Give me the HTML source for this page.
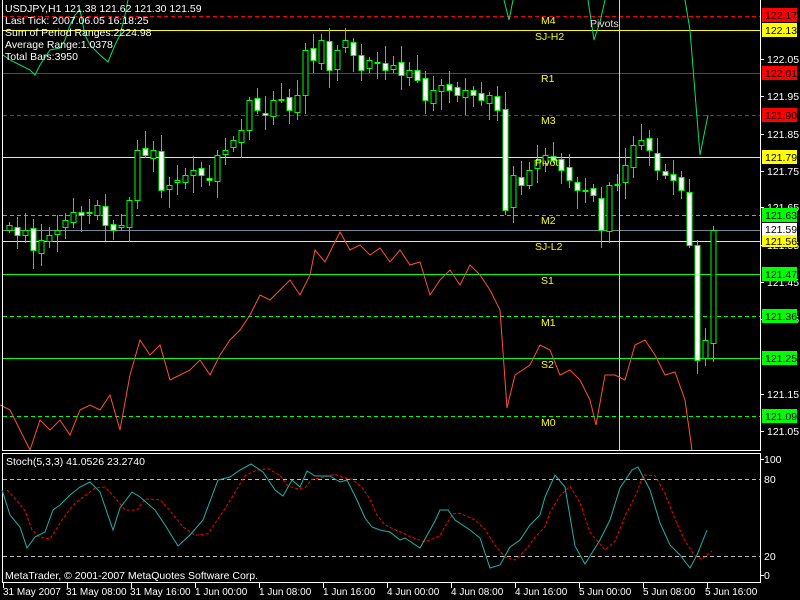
<!DOCTYPE html>
<html><head><meta charset="utf-8"><style>
html,body{margin:0;padding:0;background:#000;width:800px;height:600px;overflow:hidden}
svg{display:block}
text{font-family:"Liberation Sans",sans-serif;font-size:10.5px}
</style></head><body>
<svg id="s" width="800" height="600" viewBox="0 0 800 600" xmlns="http://www.w3.org/2000/svg">
<rect width="800" height="600" fill="#000"/>
<g stroke-width="1" shape-rendering="crispEdges">
<line x1="3" y1="16.5" x2="760" y2="16.5" stroke="#ff0000" stroke-dasharray="4,3"/>
<line x1="3" y1="30.5" x2="760" y2="30.5" stroke="#ffff00"/>
<line x1="3" y1="73.5" x2="760" y2="73.5" stroke="#ff0000"/>
<line x1="3" y1="115.5" x2="760" y2="115.5" stroke="#ff0000" stroke-dasharray="4,3"/>
<line x1="3" y1="157.5" x2="760" y2="157.5" stroke="#ffff00"/>
<line x1="3" y1="215.5" x2="760" y2="215.5" stroke="#00ff00" stroke-dasharray="4,3"/>
<line x1="3" y1="230.5" x2="760" y2="230.5" stroke="#778899"/>
<line x1="3" y1="241.5" x2="760" y2="241.5" stroke="#ffff00"/>
<line x1="3" y1="274.5" x2="760" y2="274.5" stroke="#00ff00"/>
<line x1="3" y1="316.5" x2="760" y2="316.5" stroke="#00ff00" stroke-dasharray="4,3"/>
<line x1="3" y1="358.5" x2="760" y2="358.5" stroke="#00ff00"/>
<line x1="3" y1="416.5" x2="760" y2="416.5" stroke="#00ff00" stroke-dasharray="4,3"/>
<line x1="619.5" y1="0" x2="619.5" y2="450" stroke="#d8d8b0"/>
</g>
<g id="candles"></g>
<polyline fill="none" stroke="#ff5030" stroke-width="1" points="0,405 10,410 20,430 30,450 40,420 50,430 60,420 70,435 80,410 90,405 100,410 110,395 120,430 130,375 140,340 150,355 160,345 170,380 180,375 190,370 200,360 210,375 220,355 230,340 240,330 250,315 260,295 270,300 280,290 290,280 300,295 310,275 315,250 325,262 340,232 350,250 360,245 370,255 380,248 390,262 400,250 410,265 420,262 430,295 440,280 450,270 460,285 470,265 480,275 490,290 500,310 507,408 515,375 530,365 540,345 550,350 560,375 570,370 580,380 590,400 596,425 605,375 615,375 625,380 635,345 645,340 655,355 665,375 675,372 685,400 692,450"/>
<g fill="none" stroke="#00e070" stroke-width="1">
<polyline points="3,55 10,60 20,65 30,70 35,75 40,65 50,50 60,48 65,40 70,25 75,15 80,10 85,35 90,45 100,55 108,62 115,45 120,35 125,15 128,0"/>
<polyline points="504,0 509,20 513,0"/>
<polyline points="588,0 594,40 600,22 605,0"/>
<polyline points="685,0 690,30 700,155 708,115"/>
</g>
<g fill="#ffff00">
<text x="541" y="24">M4</text><text x="535" y="40">SJ-H2</text><text x="541" y="82">R1</text>
<text x="541" y="124">M3</text><text x="535" y="166">Pivot</text><text x="541" y="224">M2</text>
<text x="535" y="250">SJ-L2</text><text x="541" y="284">S1</text><text x="541" y="326">M1</text>
<text x="541" y="368">S2</text><text x="541" y="426">M0</text>
</g>
<text x="590" y="27" fill="#e0e0d0">Pivots</text>
<g fill="#fff">
<text x="5" y="12">USDJPY,H1  121.38 121.62 121.30 121.59</text>
<text x="5" y="24">Last Tick: 2007.06.05 16:18:25</text>
<text x="5" y="36">Sum of Period Ranges:2224.98</text>
<text x="5" y="48">Average Range:1.0378</text>
<text x="5" y="60">Total Bars:3950</text>
</g>
<g stroke="#fff" fill="none" shape-rendering="crispEdges">
<line x1="2.5" y1="0" x2="2.5" y2="450"/>
<line x1="760.5" y1="0" x2="760.5" y2="450.5"/>
<line x1="2" y1="450.5" x2="761" y2="450.5"/>
<rect x="2.5" y="453.5" width="758" height="129"/>
</g>
<g fill="#fff">
<text x="767" y="63">122.05</text><text x="767" y="100">121.95</text><text x="767" y="138">121.85</text>
<text x="767" y="175">121.75</text><text x="767" y="211">121.65</text><text x="767" y="249">121.55</text>
<text x="767" y="286">121.45</text><text x="767" y="323">121.35</text><text x="767" y="398">121.15</text>
<text x="767" y="435">121.05</text>
</g>
<g stroke="#fff" shape-rendering="crispEdges">
<line x1="761" y1="59.5" x2="764" y2="59.5"/><line x1="761" y1="96.5" x2="764" y2="96.5"/><line x1="761" y1="134.5" x2="764" y2="134.5"/><line x1="761" y1="171.5" x2="764" y2="171.5"/><line x1="761" y1="207.5" x2="764" y2="207.5"/><line x1="761" y1="245.5" x2="764" y2="245.5"/><line x1="761" y1="282.5" x2="764" y2="282.5"/><line x1="761" y1="319.5" x2="764" y2="319.5"/><line x1="761" y1="394.5" x2="764" y2="394.5"/><line x1="761" y1="431.5" x2="764" y2="431.5"/>
</g>
<g font-size="10.5">
<rect x="762" y="8" width="35" height="14" fill="#ff0000"/><text x="765" y="19" fill="#000">122.17</text>
<rect x="762" y="23" width="35" height="14" fill="#ffff00"/><text x="765" y="34" fill="#000">122.13</text>
<rect x="762" y="66" width="35" height="14" fill="#ff0000"/><text x="765" y="77" fill="#000">122.01</text>
<rect x="762" y="108" width="35" height="14" fill="#ff0000"/><text x="765" y="119" fill="#000">121.90</text>
<rect x="762" y="150" width="35" height="14" fill="#ffff00"/><text x="765" y="161" fill="#000">121.79</text>
<rect x="762" y="208" width="35" height="14" fill="#00ff00"/><text x="765" y="219" fill="#000">121.63</text>
<rect x="762" y="223" width="35" height="12" fill="#ffffff"/><text x="765" y="233" fill="#000">121.59</text>
<rect x="762" y="235" width="35" height="12" fill="#ffff00"/><text x="765" y="245" fill="#000">121.56</text>
<rect x="762" y="267" width="35" height="14" fill="#00ff00"/><text x="765" y="278" fill="#000">121.47</text>
<rect x="762" y="309" width="35" height="14" fill="#00ff00"/><text x="765" y="320" fill="#000">121.36</text>
<rect x="762" y="351" width="35" height="14" fill="#00ff00"/><text x="765" y="362" fill="#000">121.25</text>
<rect x="762" y="409" width="35" height="14" fill="#00ff00"/><text x="765" y="420" fill="#000">121.09</text>
</g>
<g stroke="#c0c0c0" stroke-dasharray="4,3" shape-rendering="crispEdges">
<line x1="3" y1="479.5" x2="760" y2="479.5"/><line x1="3" y1="556.5" x2="760" y2="556.5"/>
</g>
<polyline id="sig" fill="none" stroke="#ff0000" stroke-width="1" stroke-dasharray="3,2" points=""/>
<polyline id="stm" fill="none" stroke="#20b2aa" stroke-width="1" points="2,490 10,515 20,527 27,548 35,537 45,532 53,510 60,505 70,495 80,487 90,482 100,492 113,530 120,508 132,492 140,497 155,510 165,525 178,546 190,535 203,520 218,480 230,477 240,470 251,464 263,472 275,490 283,496 292,480 300,487 307,471 315,476 330,476 340,482 347,480 357,500 365,518 372,527 380,530 390,532 400,540 405,538 420,548 435,521 440,510 448,510 455,520 470,530 480,538 490,568 500,565 510,547 520,540 530,525 540,515 545,497 555,475 565,487 575,546 585,564 600,540 610,520 620,488 632,470 638,467 650,490 660,523 670,545 680,555 690,568 697,555 707,530"/>
<text x="6" y="465" fill="#fff">Stoch(5,3,3) 41.0526 23.2740</text>
<text x="5" y="579" fill="#fff">MetaTrader, © 2001-2007 MetaQuotes Software Corp.</text>
<g fill="#fff">
<text x="764" y="463">100</text><text x="764" y="483">80</text><text x="764" y="560">20</text><text x="764" y="579">0</text>
</g>
<g stroke="#fff" shape-rendering="crispEdges">
<line x1="761" y1="459.5" x2="764" y2="459.5"/><line x1="761" y1="575.5" x2="764" y2="575.5"/>
</g>
<g id="tt" stroke="#fff" shape-rendering="crispEdges"></g>
<g fill="#fff" font-size="10" style="font-size:10px">
<text x="3" y="595" style="font-size:10px">31 May 2007</text><text x="66" y="595" style="font-size:10px">31 May 08:00</text><text x="130" y="595" style="font-size:10px">31 May 16:00</text>
<text x="195" y="595" style="font-size:10px">1 Jun 00:00</text><text x="259" y="595" style="font-size:10px">1 Jun 08:00</text><text x="323" y="595" style="font-size:10px">1 Jun 16:00</text>
<text x="387" y="595" style="font-size:10px">4 Jun 00:00</text><text x="451" y="595" style="font-size:10px">4 Jun 08:00</text><text x="515" y="595" style="font-size:10px">4 Jun 16:00</text>
<text x="579" y="595" style="font-size:10px">5 Jun 00:00</text><text x="643" y="595" style="font-size:10px">5 Jun 08:00</text><text x="705" y="595" style="font-size:10px">5 Jun 16:00</text>
</g>
</svg>
<script>
var ns="http://www.w3.org/2000/svg";
var c=[225,235,230,250,240,235,230,220,212,215,212,205,225,230,225,200,150,155,150,190,185,180,175,170,175,180,155,150,140,130,100,110,115,100,100,110,95,50,60,40,70,50,40,55,70,60,62,70,65,75,70,80,100,90,85,90,95,90,95,100,95,110,210,175,185,170,160,155,160,170,180,190,190,195,230,185,185,165,145,140,150,170,175,180,190,245,360,340,230];
var g=document.getElementById("candles");
function el(n,a){var e=document.createElementNS(ns,n);for(var k in a)e.setAttribute(k,a[k]);return e;}
for(var i=0;i<c.length;i++){
 var x=9+8*i,cl=c[i],op=i?c[i-1]+((i*5)%7-3):230;
 var t=Math.min(op,cl),b=Math.max(op,cl);
 var hi=t-(3+(i*7)%15),lo=b+(3+(i*11)%17);
 g.appendChild(el("line",{x1:x+.5,y1:hi,x2:x+.5,y2:lo,stroke:"#00ff00"}));
 if(b-t<1)b=t+1;
 g.appendChild(el("rect",{x:x-2,y:t+.5,width:5,height:b-t,fill:cl>op?"#fff":"#000",stroke:"#00ff00","stroke-width":1}));
}
var p=document.getElementById("stm").getAttribute("points").trim().split(" ").map(function(s){return s.split(",").map(Number)});
var q=[];for(var j=0;j<p.length;j++){var a=p[Math.max(0,j-1)],b2=p[j],d=p[Math.max(0,j-2)];q.push((b2[0]+5)+","+((a[1]+b2[1]+d[1])/3).toFixed(1));}
document.getElementById("sig").setAttribute("points",q.join(" "));
var tt=document.getElementById("tt");
for(var k=0;k<12;k++){var xx=3+64*k;tt.appendChild(el("line",{x1:xx+.5,y1:583,x2:xx+.5,y2:588}));}
</script>
</body></html>
